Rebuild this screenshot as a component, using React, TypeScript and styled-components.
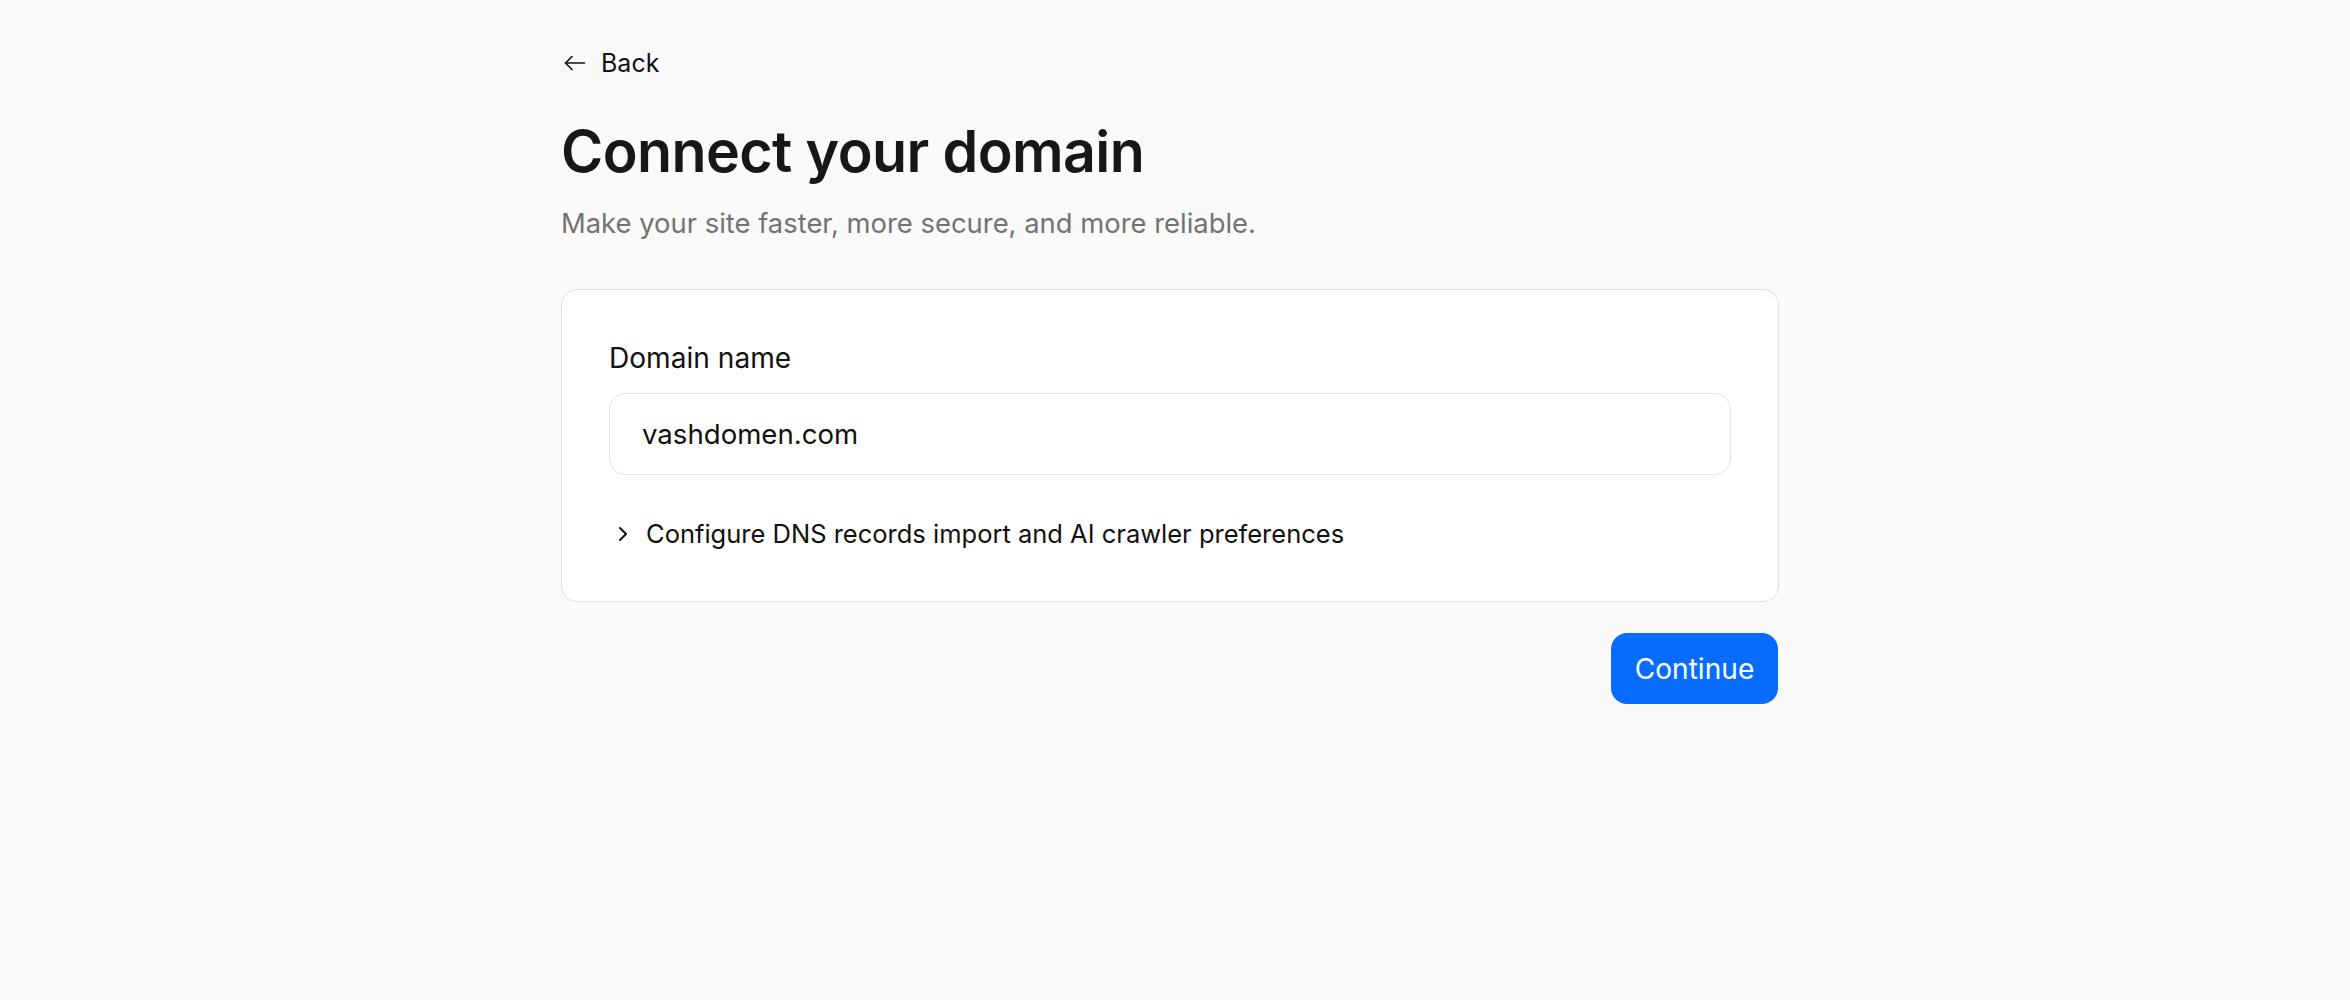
import React from "react";
import styled, { createGlobalStyle } from "styled-components";

const GlobalStyle = createGlobalStyle`
  html, body {
    margin: 0;
    padding: 0;
    background: #fafafa;
  }
  body {
    font-family: Inter, "Noto Sans", "Liberation Sans", sans-serif;
    color: #111111;
    -webkit-font-smoothing: antialiased;
  }
`;

const Page = styled.div`
  display: flex;
  justify-content: center;
  padding: 45px 10px 0 0;
  min-height: 1000px;
  box-sizing: border-box;
`;

const Column = styled.div`
  width: 1218px;
  display: flex;
  flex-direction: column;
`;

const BackLink = styled.a`
  display: inline-flex;
  align-items: center;
  gap: 15px;
  align-self: flex-start;
  padding-left: 3px;
  font-size: 25px;
  line-height: 36px;
  font-weight: 400;
  color: #111111;
  text-decoration: none;
  cursor: pointer;
`;

const Title = styled.h1`
  margin: 34px 0 0;
  font-size: 57.3px;
  line-height: 72px;
  font-weight: 600;
  letter-spacing: -0.01em;
  color: #171717;
`;

const Subtitle = styled.p`
  margin: 16px 0 0;
  font-size: 27.4px;
  line-height: 40px;
  color: #737373;
`;

const Card = styled.section`
  margin-top: 46px;
  background: #ffffff;
  border: 1.5px solid #e0e0e0;
  border-radius: 16px;
  padding: 48px 47px 49px;
  display: flex;
  flex-direction: column;
`;

const Label = styled.label`
  font-size: 28.1px;
  line-height: 40px;
  font-weight: 400;
  color: #111111;
`;

const Input = styled.input`
  margin-top: 15px;
  height: 82px;
  box-sizing: border-box;
  border: 1.5px solid #e4e4e4;
  border-radius: 16px;
  padding: 0 32px;
  font-family: inherit;
  font-size: 27.6px;
  color: #111111;
  background: #ffffff;
  outline: none;
`;

const Disclosure = styled.button`
  margin-top: 41px;
  display: flex;
  align-items: center;
  gap: 18px;
  padding: 0 0 0 9px;
  border: none;
  background: none;
  font-family: inherit;
  font-size: 25.5px;
  line-height: 36px;
  color: #111111;
  cursor: pointer;
  text-align: left;
`;

const Actions = styled.div`
  margin-top: 31px;
  display: flex;
  justify-content: flex-end;
  padding-right: 1px;
`;

const PrimaryButton = styled.button`
  height: 71px;
  width: 167px;
  padding: 0;
  border: none;
  border-radius: 16px;
  background: #086dff;
  color: #ffffff;
  font-family: inherit;
  font-size: 28.1px;
  font-weight: 400;
  cursor: pointer;
`;

const ArrowLeftIcon = () => (
  <svg width="22" height="16" viewBox="0 0 22 16" fill="none" stroke="#111" strokeWidth="1.6" strokeLinecap="round" strokeLinejoin="round">
    <path d="M8 1.5 L1.5 8 L8 14.5" />
    <path d="M1.5 8 H20.5" />
  </svg>
);

const ChevronIcon = () => (
  <svg width="10" height="16" viewBox="0 0 10 16" fill="none" stroke="#111" strokeWidth="2" strokeLinecap="round" strokeLinejoin="round">
    <path d="M2 2 L8 8 L2 14" />
  </svg>
);

export default function App() {
  return (
    <>
      <GlobalStyle />
      <Page>
        <Column>
          <BackLink>
            <ArrowLeftIcon />
            Back
          </BackLink>
          <Title>Connect your domain</Title>
          <Subtitle>Make your site faster, more secure, and more reliable.</Subtitle>
          <Card>
            <Label htmlFor="domain">Domain name</Label>
            <Input id="domain" defaultValue="vashdomen.com" />
            <Disclosure type="button">
              <ChevronIcon />
              Configure DNS records import and AI crawler preferences
            </Disclosure>
          </Card>
          <Actions>
            <PrimaryButton type="button">Continue</PrimaryButton>
          </Actions>
        </Column>
      </Page>
    </>
  );
}
